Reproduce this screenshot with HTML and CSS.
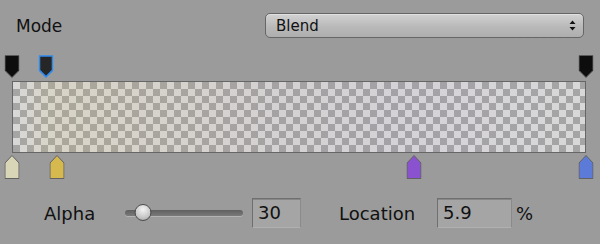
FILE: index.html
```html
<!DOCTYPE html>
<html>
<head>
<meta charset="utf-8">
<link rel="stylesheet" href="styles.css">
</head>
<body>
<div class="panel">
  <div class="mode-row">
    <span class="mode-label">Mode</span>
    <div class="select">
      <span>Blend</span>
      <svg class="arrows" width="7" height="11" viewBox="0 0 7 11"><path d="M3.5 0.5 L6.5 4 H0.5 Z M3.5 10.5 L6.5 7 H0.5 Z" fill="#111"/></svg>
    </div>
  </div>

  <div class="editor">
    <div class="keys keys-top">
      <svg class="key key-top" style="left:0%" width="15" height="23" viewBox="0 0 15 23"><path d="M0.5 0.5 H14.5 V15.5 L7.5 22.5 L0.5 15.5 Z" fill="#0d0d0d" stroke="#5a5a5a"/></svg>
      <svg class="key key-top" style="left:5.9%" width="15" height="23" viewBox="0 0 15 23"><path d="M1 1 H14 V15.3 L7.5 21.8 L1 15.3 Z" fill="#262626" stroke="#2d8cf0" stroke-width="1.6"/></svg>
      <svg class="key key-top" style="left:100%" width="15" height="23" viewBox="0 0 15 23"><path d="M0.5 0.5 H14.5 V15.5 L7.5 22.5 L0.5 15.5 Z" fill="#0d0d0d" stroke="#5a5a5a"/></svg>
    </div>
    <div class="bar"><div class="bar-fill"></div></div>
    <div class="keys keys-bottom">
      <svg class="key key-bottom" style="left:0%" width="15" height="24" viewBox="0 0 15 24"><path d="M7.5 0.5 L14.5 8 V23.5 H0.5 V8 Z" fill="#d9d6b8" stroke="#626262"/></svg>
      <svg class="key key-bottom" style="left:7.9%" width="15" height="24" viewBox="0 0 15 24"><path d="M7.5 0.5 L14.5 8 V23.5 H0.5 V8 Z" fill="#d5b94f" stroke="#626262"/></svg>
      <svg class="key key-bottom" style="left:70%" width="15" height="24" viewBox="0 0 15 24"><path d="M7.5 0.5 L14.5 8 V23.5 H0.5 V8 Z" fill="#8a52cf" stroke="#626262"/></svg>
      <svg class="key key-bottom" style="left:100%" width="15" height="24" viewBox="0 0 15 24"><path d="M7.5 0.5 L14.5 8 V23.5 H0.5 V8 Z" fill="#5c7bd8" stroke="#626262"/></svg>
    </div>
  </div>

  <div class="controls">
    <span class="lbl lbl-alpha">Alpha</span>
    <div class="slider">
      <div class="track"></div>
      <div class="thumb" style="left:15%"></div>
    </div>
    <div class="field field-alpha">30</div>
    <span class="lbl lbl-loc">Location</span>
    <div class="field field-loc">5.9</div>
    <span class="pct">%</span>
  </div>
</div>
</body>
</html>
```

FILE: styles.css
```css
html, body {
  margin: 0;
  padding: 0;
  background: #9b9b9b;
}
body {
  width: 600px;
  height: 244px;
  overflow: hidden;
  font-family: "DejaVu Sans", "Open Sans", sans-serif;
  color: #111;
}
.panel {
  padding-top: 13px;
}
.mode-row {
  display: flex;
  align-items: center;
  height: 25px;
}
.mode-label {
  font-size: 17px;
  padding-left: 16px;
  width: 265px;
  box-sizing: border-box;
}
.select {
  width: 319px;
  height: 25px;
  box-sizing: border-box;
  border: 1px solid #666;
  border-radius: 5px;
  background: linear-gradient(#d2d2d2, #b9b9b9 55%, #aeaeae);
  display: flex;
  align-items: center;
  justify-content: space-between;
  padding: 0 7px 0 10px;
  font-size: 15px;
  box-shadow: inset 0 1px 0 rgba(255,255,255,0.35);
}
.arrows {
  display: block;
}
.editor {
  margin-top: 17px;
  margin-left: 12px;
  width: 574px;
}
.keys {
  position: relative;
}
.keys-top {
  height: 26px;
}
.keys-bottom {
  height: 27px;
}
.key {
  position: absolute;
  display: block;
  transform: translateX(-50%);
}
.key-top {
  top: 0;
}
.key-bottom {
  top: 2px;
}
.bar {
  height: 72px;
  box-sizing: border-box;
  border: 1px solid #666;
  background-color: #d8d8d8;
  background-image:
    linear-gradient(45deg, #a5a5a5 25%, transparent 25%, transparent 75%, #a5a5a5 75%),
    linear-gradient(45deg, #a5a5a5 25%, transparent 25%, transparent 75%, #a5a5a5 75%);
  background-size: 14px 14px;
  background-position: 0 0, 7px 7px;
}
.bar-fill {
  height: 100%;
  background: linear-gradient(to right,
    rgba(218,214,182,0) 0%,
    rgba(214,192,104,0.13) 5.9%,
    rgba(213,185,79,0.125) 8%,
    rgba(176,132,130,0.08) 40%,
    rgba(138,82,207,0.045) 70%,
    rgba(92,123,216,0) 100%);
}
.controls {
  margin-top: 18px;
  display: flex;
  align-items: center;
  height: 30px;
  padding-left: 44px;
}
.lbl {
  font-size: 18px;
}
.lbl-alpha {
  width: 81px;
}
.slider {
  position: relative;
  width: 118px;
  height: 18px;
  display: flex;
  align-items: center;
}
.track {
  width: 100%;
  height: 6px;
  border-radius: 3px;
  background: linear-gradient(#5f5f5f, #7a7a7a);
  box-shadow: 0 1px 0 rgba(255,255,255,0.25);
}
.thumb {
  position: absolute;
  top: 0;
  width: 17px;
  height: 17px;
  box-sizing: border-box;
  border-radius: 50%;
  border: 1px solid #4c4c4c;
  background: radial-gradient(circle at 50% 30%, #f4f4f4, #c8c8c8 60%, #9c9c9c);
  transform: translateX(-50%);
}
.field {
  height: 30px;
  box-sizing: border-box;
  border: 1px solid #6f6f6f;
  border-bottom-color: #b0b0b0;
  border-right-color: #8a8a8a;
  background: #a5a5a5;
  box-shadow: inset 0 1px 0 #878787;
  font-size: 18px;
  line-height: 27px;
  padding-left: 5px;
}
.field-alpha {
  margin-left: 9px;
  width: 49px;
}
.lbl-loc {
  margin-left: 38px;
  width: 98px;
}
.field-loc {
  width: 75px;
}
.pct {
  margin-left: 4px;
  font-size: 18px;
}
```
